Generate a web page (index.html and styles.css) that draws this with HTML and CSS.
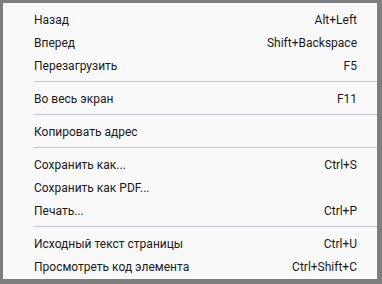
FILE: index.html
```html
<!DOCTYPE html>
<html lang="ru">
<head>
    <meta charset="UTF-8">
    <title>Контекстное меню</title>
    <link rel="stylesheet" href="styles.css">
</head>
<body>
    <div class="menu">
        <div class="item"><span>Назад</span><span class="key">Alt+Left</span></div>
        <div class="item"><span>Вперед</span><span class="key">Shift+Backspace</span></div>
        <div class="item"><span>Перезагрузить</span><span class="key">F5</span></div>
        <div class="sep"></div>
        <div class="item"><span>Во весь экран</span><span class="key">F11</span></div>
        <div class="sep"></div>
        <div class="item"><span>Копировать адрес</span></div>
        <div class="sep"></div>
        <div class="item"><span>Сохранить как...</span><span class="key">Ctrl+S</span></div>
        <div class="item"><span>Сохранить как PDF...</span></div>
        <div class="item"><span>Печать...</span><span class="key">Ctrl+P</span></div>
        <div class="sep"></div>
        <div class="item"><span>Исходный текст страницы</span><span class="key">Ctrl+U</span></div>
        <div class="item"><span>Просмотреть код элемента</span><span class="key">Ctrl+Shift+C</span></div>
    </div>
</body>
</html>
```

FILE: styles.css
```css
body {
    margin: 0;
    font-family: Roboto, "Noto Sans", sans-serif;
    font-size: 12px;
    color: #1a1a1a;
}
.menu {
    width: 382px;
    height: 284px;
    box-sizing: border-box;
    background-color: #f9f9f9;
    border-style: solid;
    border-color: #7e7e7e;
    border-width: 3px 5px 5px 3px;
    padding: 5px 0 2px;
}
.item {
    display: flex;
    justify-content: space-between;
    align-items: center;
    height: 23px;
    padding: 0 20px 0 31px;
}
.sep {
    margin: 4px 0 5px 31px;
    border-top: 1px solid #c4c8cc;
}
```
